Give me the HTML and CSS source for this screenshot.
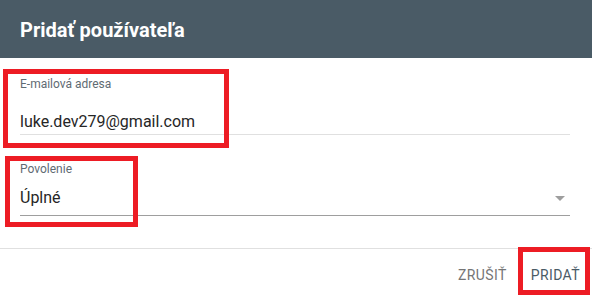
FILE: index.html
```html
<!DOCTYPE html>
<html lang="sk">
<head>
<meta charset="utf-8">
<title>Pridať používateľa</title>
<link rel="stylesheet" href="styles.css">
</head>
<body>
<div class="dialog">
  <header class="header">
    <h1 class="title">Pridať používateľa</h1>
  </header>
  <div class="content">
    <div class="field field-email">
      <label class="label">E-mailová adresa</label>
      <div class="value value-email">luke.dev279@gmail.com</div>
    </div>
    <div class="field field-select">
      <label class="label">Povolenie</label>
      <div class="value value-select">
        <span>Úplné</span>
        <span class="arrow"></span>
      </div>
    </div>
  </div>
  <footer class="footer">
    <button class="btn btn-cancel">ZRUŠIŤ</button>
    <button class="btn btn-primary">PRIDAŤ</button>
  </footer>
  <div class="mark mark-email"></div>
  <div class="mark mark-perm"></div>
  <div class="mark mark-add"></div>
</div>
</body>
</html>
```

FILE: styles.css
```css
html, body {
  margin: 0;
  padding: 0;
  background: #ffffff;
  font-family: Roboto, "Liberation Sans", Arial, sans-serif;
  overflow: hidden;
}

.dialog {
  position: relative;
  width: 592px;
  height: 295px;
  overflow: hidden;
  background: #ffffff;
}

.header {
  height: 58px;
  background: #4a5b66;
  display: flex;
  align-items: center;
  padding: 0 20px;
  box-sizing: border-box;
}

.title {
  margin: 0;
  color: #ffffff;
  font-size: 20px;
  font-weight: 700;
  line-height: 24px;
  padding-top: 2px;
}

.content {
  padding: 0 22px 0 20px;
}

.field {
  display: flex;
  flex-direction: column;
}

.label {
  font-size: 12px;
  line-height: 16px;
  color: #5f6b73;
}

.value {
  font-size: 16px;
  line-height: 20px;
  color: #262626;
}

.field-email {
  padding-top: 18px;
}

.value-email {
  margin-top: 19.5px;
  padding-bottom: 2.5px;
  border-bottom: 1px solid #e0e0e0;
}

.field-select {
  padding-top: 26px;
}

.value-select {
  margin-top: 10.5px;
  padding-bottom: 7.5px;
  border-bottom: 1px solid #9e9e9e;
  display: flex;
  align-items: center;
  justify-content: space-between;
}

.arrow {
  width: 0;
  height: 0;
  border-left: 5px solid transparent;
  border-right: 5px solid transparent;
  border-top: 5px solid #9e9e9e;
  margin-right: 5px;
  margin-top: 2px;
}

.footer {
  margin-top: 32px;
  border-top: 1px solid #e0e0e0;
  display: flex;
  justify-content: flex-end;
  gap: 8px;
  padding: 8px 4px 8px 0;
}

.btn {
  height: 36px;
  padding: 0 8px;
  border: none;
  background: transparent;
  font-family: Roboto, "Liberation Sans", Arial, sans-serif;
  font-size: 14px;
  font-weight: 400;
  letter-spacing: 0.4px;
  line-height: 16px;
}

.btn-cancel {
  color: #757575;
}

.btn-primary {
  color: #4a5b66;
}

.mark {
  position: absolute;
  border: 5px solid #ed1c24;
  box-sizing: border-box;
}

.mark-email {
  left: 3px;
  top: 69px;
  width: 226px;
  height: 79px;
}

.mark-perm {
  left: 5px;
  top: 156px;
  width: 133px;
  height: 71px;
}

.mark-add {
  left: 518px;
  top: 247px;
  width: 72px;
  height: 48px;
}
```
